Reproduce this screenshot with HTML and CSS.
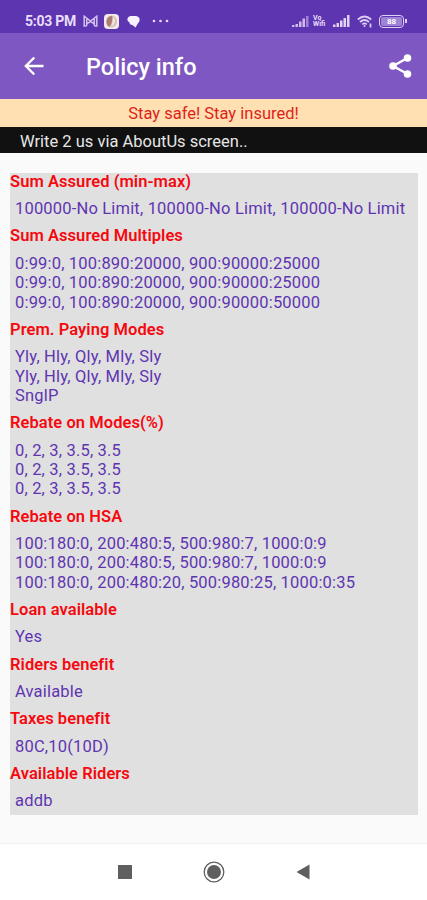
FILE: index.html
```html
<!DOCTYPE html>
<html lang="en">
<head>
    <meta charset="UTF-8">
    <meta name="viewport" content="width=device-width, initial-scale=1.0">
    <title>Policy info</title>
    <link rel="stylesheet" href="styles.css">
</head>
<body>
    <div class="screen">
        <div class="status-bar">
            <span class="clock">5:03 PM</span>
            <svg class="icon-mail" width="15" height="14" viewBox="0 0 15 14" fill="none" stroke="#d3c2ef" stroke-width="1.5">
                <path d="M3.5 12H1.2V2.2L7.5 7l6.3-4.8V12h-2.3M3.7 5v7M11.3 5v7M4 9.5l3.5-2 3.5 2" />
            </svg>
            <svg class="icon-photo" width="15" height="15" viewBox="0 0 15 15">
                <rect width="15" height="15" rx="4" fill="#f3eaec" />
                <ellipse cx="7.5" cy="7.5" rx="5.5" ry="6" fill="#d6bfb4" />
                <path d="M8 2C2 2 1 10 5 13c2-2 4-6 3-11z" fill="#ad7d74" />
                <path d="M9 3c3 2 3 7-2 10 1-3 2-6 2-10z" fill="#f2e5de" />
            </svg>
            <svg class="icon-chat" width="13" height="13" viewBox="0 0 13 13">
                <path d="M3.5 1h5.5Q12.5 1.500 12.700 4.500Q12.500 7 10.800 8.500L8.500 12.500L5.500 10Q2.500 9.500 2.500 7.500Q.2 6.500.3 4Q.8 1.300 3.500 1z" fill="#f6f0ff" />
            </svg>
            <svg class="icon-more" width="17" height="4" viewBox="0 0 17 4" fill="#e9defa">
                <circle cx="2" cy="2" r="1.300" />
                <circle cx="8.500" cy="2" r="1.300" />
                <circle cx="15" cy="2" r="1.300" />
            </svg>
            <div class="status-right">
                <svg width="17" height="12" viewBox="0 0 17 12" fill="#cfbcec">
                    <path d="M0 12v-2h2.500v2zM3.500 12V9H6v3zM7 12V6.500h2.500V12zM10.500 12V3.500H13V12z" />
                    <path d="M14 12V1h2.500v11z" fill="#9f82d6" />
                </svg>
                <span class="carrier"><span>Vo</span><span>Wifi</span></span>
                <svg class="signal-full" width="17" height="12" viewBox="0 0 17 12" fill="#e0d2f5">
                    <path d="M0 12V9.500h2.500V12zM3.500 12V8H6v4zM7 12V5.500h2.500V12zM10.500 12V3H13v9zM14 12V0h2.500v12z" />
                </svg>
                <svg class="icon-wifi" width="16" height="13" viewBox="0 0 16 13" fill="none" stroke="#dccdf3" stroke-width="1.700">
                    <path d="M.8 4.500Q7.500-1.500 14.200 4.500M3 7q4.500-4 9 0M5.300 9.300q2.200-1.800 4.400 0" />
                    <circle cx="7.500" cy="11" r="1" fill="#dccdf3" stroke="none" />
                    <path d="M13.500 8.500v4" />
                </svg>
                <span class="battery"><span class="battery-level">88</span></span>
            </div>
        </div>

        <header class="app-bar">
            <svg width="20" height="20" viewBox="0 0 20 20" fill="none" stroke="#fff" stroke-width="2.300">
                <path d="M19.500 10H2.300M10.300 1.500L1.800 10l8.500 8.500" />
            </svg>
            <h1>Policy info</h1>
            <svg class="icon-share" width="24" height="26" viewBox="0 0 24 26" fill="#fff">
                <path d="M19.500 5L5 13l14.500 8" fill="none" stroke="#fff" stroke-width="2.400" />
                <circle cx="19.500" cy="5" r="3.800" />
                <circle cx="5" cy="13" r="3.800" />
                <circle cx="19.500" cy="21" r="3.800" />
            </svg>
        </header>

        <div class="slogan">Stay safe! Stay insured!</div>
        <div class="notice">Write 2 us via AboutUs screen..</div>

        <main class="content">
            <div class="policy">
                <h2>Sum Assured (min-max)</h2>
                <p>100000-No Limit, 100000-No Limit, 100000-No Limit</p>
                <h2>Sum Assured Multiples</h2>
                <p>0:99:0, 100:890:20000, 900:90000:25000<br>0:99:0, 100:890:20000, 900:90000:25000<br>0:99:0, 100:890:20000, 900:90000:50000</p>
                <h2>Prem. Paying Modes</h2>
                <p>Yly, Hly, Qly, Mly, Sly<br>Yly, Hly, Qly, Mly, Sly<br>SnglP</p>
                <h2>Rebate on Modes(%)</h2>
                <p>0, 2, 3, 3.5, 3.5<br>0, 2, 3, 3.5, 3.5<br>0, 2, 3, 3.5, 3.5</p>
                <h2>Rebate on HSA</h2>
                <p>100:180:0, 200:480:5, 500:980:7, 1000:0:9<br>100:180:0, 200:480:5, 500:980:7, 1000:0:9<br>100:180:0, 200:480:20, 500:980:25, 1000:0:35</p>
                <h2>Loan available</h2>
                <p>Yes</p>
                <h2>Riders benefit</h2>
                <p>Available</p>
                <h2>Taxes benefit</h2>
                <p>80C,10(10D)</p>
                <h2>Available Riders</h2>
                <p>addb</p>
            </div>
        </main>

        <nav class="nav-bar">
            <svg width="14" height="14" viewBox="0 0 14 14"><rect width="14" height="14" fill="#5f5f5f" /></svg>
            <svg width="22" height="22" viewBox="0 0 22 22">
                <circle cx="11" cy="11" r="9.800" fill="none" stroke="#5f5f5f" stroke-width="1.300" />
                <circle cx="11" cy="11" r="7" fill="#5f5f5f" />
            </svg>
            <svg width="14" height="16" viewBox="0 0 14 16"><path d="M13.500.5v15L.5 8z" fill="#5f5f5f" /></svg>
        </nav>
    </div>
</body>
</html>
```
FILE: styles.css
```css
* {
    margin: 0;
    padding: 0;
    box-sizing: border-box;
}

body {
    font-family: Roboto, "Liberation Sans", sans-serif;
    background: #fafafa;
}

svg {
    display: block;
    flex-shrink: 0;
}

.screen {
    display: flex;
    flex-direction: column;
    height: 900px;
    width: 427px;
    overflow: hidden;
}

.status-bar {
    display: flex;
    align-items: center;
    height: 33px;
    padding: 9px 20px 0 25px;
    background: #5e35b1;
    color: #e9defa;
}

.clock {
    width: 51px;
    font-size: 14px;
    font-weight: 700;
    letter-spacing: -0.25px;
    white-space: nowrap;
}

.icon-mail {
    margin-left: 7px;
}

.icon-photo {
    margin-left: 6px;
}

.icon-chat {
    margin-left: 8px;
}

.icon-more {
    margin-left: 12px;
}

.status-right {
    display: flex;
    align-items: center;
    margin-left: auto;
}

.carrier {
    display: flex;
    flex-direction: column;
    width: 16px;
    margin-left: 4px;
    font-size: 7px;
    font-weight: 700;
    line-height: 6.5px;
}

.signal-full {
    margin-left: 4px;
}

.icon-wifi {
    margin-left: 7px;
}

.battery {
    position: relative;
    width: 25px;
    height: 13px;
    margin: 0 3px 0 6px;
    padding: 1px;
    border: 1.5px solid #e0d2f5;
    border-radius: 4px;
}

/* battery tip */
.battery::after {
    content: "";
    position: absolute;
    right: -4px;
    top: 3px;
    width: 2px;
    height: 4px;
    background: #e0d2f5;
}

.battery-level {
    display: block;
    height: 9px;
    border-radius: 2px;
    background: #9f83d6;
    color: #fff;
    font-size: 8px;
    font-weight: 700;
    line-height: 9px;
    text-align: center;
}

.app-bar {
    display: flex;
    align-items: center;
    height: 66px;
    padding: 0 15px 0 24px;
    background: #7e57c2;
    color: #fff;
}

.app-bar h1 {
    margin-left: 42px;
    padding-top: 2px;
    font-size: 23.5px;
    font-weight: 500;
}

.icon-share {
    margin-left: auto;
}

.slogan {
    height: 28px;
    background: #ffe0b2;
    color: #e01e1a;
    font-size: 16.5px;
    line-height: 30px;
    text-align: center;
}

.notice {
    height: 26px;
    padding-left: 20px;
    background: #111;
    color: #e6e6e6;
    font-size: 16.5px;
    line-height: 29px;
}

.content {
    flex: 1;
    padding: 20px 9px 0 10px;
    background: #fafafa;
}

.policy {
    height: 642px;
    padding-top: 0.6px;
    background: #e0e0e0;
    color: #5e35b1;
    font-size: 16.5px;
    line-height: 19.45px;
    letter-spacing: 0.18px;
}

.policy h2 {
    height: 16px;
    color: #f5090f;
    font-size: 16.5px;
    font-weight: 600;
    line-height: 16px;
    letter-spacing: 0.06px;
}

.policy p {
    padding: 9.5px 0 9.6px 5px;
    white-space: nowrap;
}

.nav-bar {
    display: flex;
    align-items: center;
    justify-content: center;
    gap: 71px;
    height: 57px;
    border-top: 1px solid #f1f1f1;
    background: #fff;
}
```
